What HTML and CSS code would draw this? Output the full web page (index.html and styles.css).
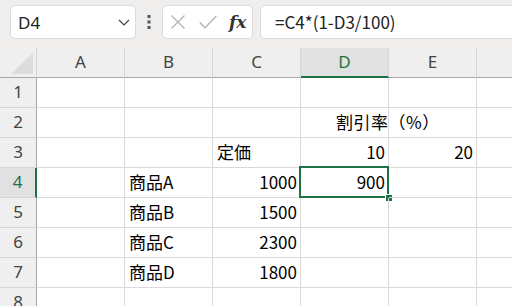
FILE: index.html
```html
<!DOCTYPE html>
<html lang="ja">
  <head>
    <meta charset="UTF-8" />
    <title>Sheet</title>
    <link rel="stylesheet" href="styles.css">
  </head>
  <body>
    <div class="toolbar">
      <div class="namebox">
        <span class="name">D4</span>
        <svg class="chev" width="12" height="7" viewBox="0 0 12 7">
          <path d="M1 1 L6 6 L11 1" fill="none" stroke="#444" stroke-width="1.2" />
        </svg>
      </div>
      <svg class="dots" width="4" height="14" viewBox="0 0 4 14">
        <rect x="0.5" y="0" width="3" height="3" fill="#555" />
        <rect x="0.5" y="5.5" width="3" height="3" fill="#555" />
        <rect x="0.5" y="11" width="3" height="3" fill="#555" />
      </svg>
      <div class="fbtns">
        <svg width="16" height="14" viewBox="0 0 16 14">
          <path d="M1.5 0.5 L14.5 13.5 M14.5 0.5 L1.5 13.5" stroke="#b4b4b4" stroke-width="1.3" />
        </svg>
        <svg width="18" height="14" viewBox="0 0 18 14">
          <path d="M0.8 7.5 L6 12.8 L17.3 1" fill="none" stroke="#b4b4b4" stroke-width="1.3" />
        </svg>
        <span class="fx">fx</span>
      </div>
      <div class="formula">=C4*(1-D3/100)</div>
    </div>

    <div class="sheet">
      <div class="c h corner"><div class="tri"></div></div>
      <div class="c h">A</div>
      <div class="c h">B</div>
      <div class="c h">C</div>
      <div class="c h sel-col">D</div>
      <div class="c h">E</div>
      <div class="c h last"></div>

      <div class="c r">1</div>
      <div class="c"></div><div class="c"></div><div class="c"></div><div class="c"></div><div class="c"></div><div class="c last"></div>

      <div class="c r">2</div>
      <div class="c"></div><div class="c"></div><div class="c"></div>
      <div class="c span"><span class="over">割引率（%）</span></div>
      <div class="c"></div><div class="c last"></div>

      <div class="c r">3</div>
      <div class="c"></div><div class="c"></div>
      <div class="c txt">定価</div>
      <div class="c num">10</div>
      <div class="c num">20</div>
      <div class="c last"></div>

      <div class="c r sel-row">4</div>
      <div class="c"></div>
      <div class="c txt">商品A</div>
      <div class="c num">1000</div>
      <div class="c num active">900<div class="cursor"></div><div class="handle"></div></div>
      <div class="c"></div><div class="c last"></div>

      <div class="c r">5</div>
      <div class="c"></div>
      <div class="c txt">商品B</div>
      <div class="c num">1500</div>
      <div class="c"></div><div class="c"></div><div class="c last"></div>

      <div class="c r">6</div>
      <div class="c"></div>
      <div class="c txt">商品C</div>
      <div class="c num">2300</div>
      <div class="c"></div><div class="c"></div><div class="c last"></div>

      <div class="c r">7</div>
      <div class="c"></div>
      <div class="c txt">商品D</div>
      <div class="c num">1800</div>
      <div class="c"></div><div class="c"></div><div class="c last"></div>

      <div class="c r">8</div>
      <div class="c"></div><div class="c"></div><div class="c"></div><div class="c"></div><div class="c"></div><div class="c last"></div>
    </div>
  </body>
</html>
```

FILE: styles.css
```css
body {
  margin: 0;
  width: 512px;
  height: 306px;
  overflow: hidden;
  background: #fff;
  font-family: "Noto Sans CJK JP", "Noto Sans", sans-serif;
  color: #000;
}

/* formula bar */
.toolbar {
  height: 48px;
  box-sizing: border-box;
  padding: 5px 0 0 10px;
  background: #f0eded;
  display: flex;
  align-items: flex-start;
}

.namebox {
  width: 126px;
  height: 34px;
  box-sizing: border-box;
  background: #fff;
  border: 1px solid #dcd9d9;
  border-radius: 5px;
  display: flex;
  align-items: center;
  justify-content: space-between;
  padding: 0 5px 0 7px;
}

.name {
  font-family: "Noto Sans", sans-serif;
  font-size: 17px;
  color: #222;
}

.dots {
  margin: 10px 11px 0 11px;
}

.fbtns {
  width: 91px;
  height: 34px;
  box-sizing: border-box;
  background: #fff;
  border: 1px solid #dcd9d9;
  border-radius: 5px;
  display: flex;
  align-items: center;
  gap: 13px;
  padding: 0 0 0 7px;
}

.fx {
  font-family: "DejaVu Serif", "Liberation Serif", serif;
  font-style: italic;
  font-weight: bold;
  font-size: 17px;
  color: #333;
  margin-left: -1px;
}

.formula {
  margin-left: 7px;
  flex: 1;
  height: 34px;
  margin-right: -20px;
  box-sizing: border-box;
  background: #fff;
  border: 1px solid #dcd9d9;
  border-radius: 5px;
  padding-left: 14px;
  font-size: 17px;
  line-height: 31px;
  color: #222;
}

/* grid */
.sheet {
  display: grid;
  grid-template-columns: 37px repeat(5, 88px) 40px;
  grid-auto-rows: 30px;
}

.c {
  box-sizing: border-box;
  border-right: 1px solid #dadada;
  border-bottom: 1px solid #dadada;
  font-size: 17px;
  line-height: 28px;
  white-space: nowrap;
  position: relative;
}

.h {
  background: #efefef;
  border-right-color: #d6d6d6;
  border-bottom-color: #a8a8a8;
  text-align: center;
  font-family: "Noto Sans", sans-serif;
  color: #444;
}

.r {
  background: #efefef;
  border-right-color: #a8a8a8;
  border-bottom-color: #d6d6d6;
  text-align: center;
  font-family: "Noto Sans", sans-serif;
  color: #444;
}

.corner {
  border-right-color: #d6d6d6;
}

.tri {
  position: absolute;
  right: 3px;
  bottom: 3px;
  width: 22px;
  height: 21px;
  background: #dcdcdc;
  clip-path: polygon(100% 0, 100% 100%, 0 100%);
}

.last {
  border-right: none;
}

.sel-col {
  background: #e1e1e1;
  border-bottom: 2px solid #1f7244;
  color: #1f7244;
}

.sel-row {
  background: #e1e1e1;
  border-right: 2px solid #1f7244;
  color: #1f7244;
}

.txt {
  padding-left: 4px;
}

.num {
  text-align: right;
  padding-right: 3px;
}

.span {
  overflow: visible;
}

.over {
  position: absolute;
  left: 35px;
  top: 0;
  letter-spacing: 0.5px;
}

.cursor {
  position: absolute;
  left: -2px;
  top: -2px;
  right: -1px;
  bottom: -1px;
  border: 2px solid #1f7244;
}

.handle {
  position: absolute;
  right: -5px;
  bottom: -5px;
  width: 6px;
  height: 6px;
  background: #1f7244;
  border: 1px solid #fff;
}
```
